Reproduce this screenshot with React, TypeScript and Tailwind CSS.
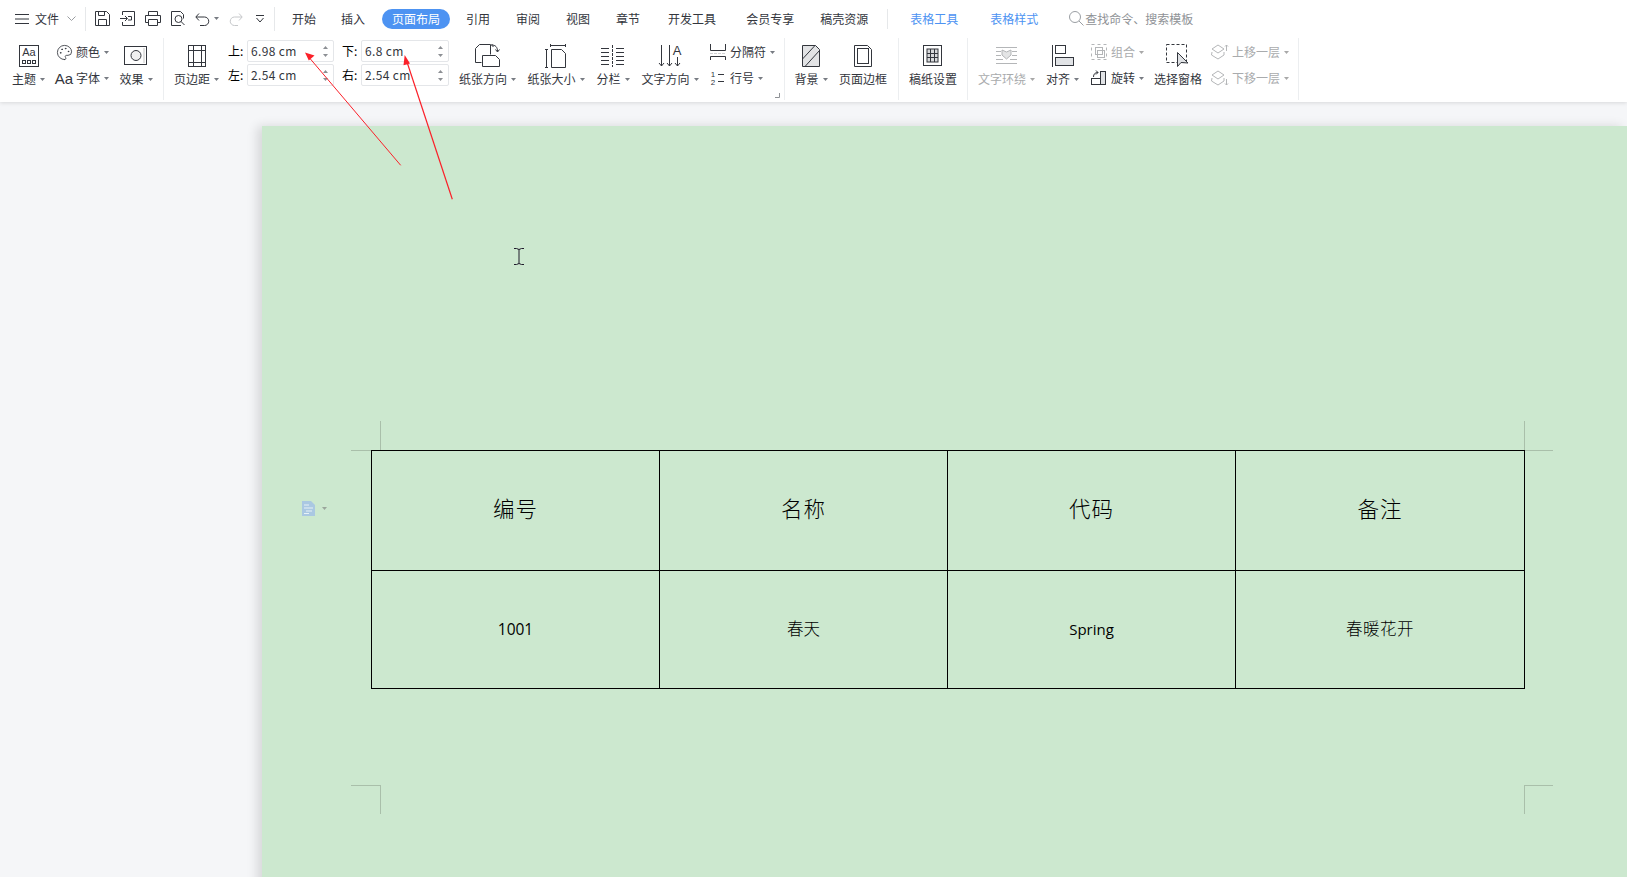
import React from "react";
import { Palette } from "lucide-react";

const DARK = "#33363d";
const GRAY = "#b4b6b8";

function Caret({ gray = false }: { gray?: boolean }) {
  return (
    <svg width="5" height="3" viewBox="0 0 5 3" className="ml-[4px] shrink-0">
      <path d="M0 0h5L2.5 3z" fill={gray ? "#a8a8a8" : "#777b82"} />
    </svg>
  );
}

function Big({ icon, label, caret = true, gray = false, className }: { icon: React.ReactNode; label: string; caret?: boolean; gray?: boolean; className: string }) {
  return (
    <div className={`flex flex-col items-center pt-[7px] shrink-0 ${className}`}>
      <div className="h-[24px] flex items-center justify-center">{icon}</div>
      <div className={`mt-[2px] h-[18px] flex items-center whitespace-nowrap leading-[18px] ${gray ? "text-[#a9abad]" : "text-[#33363d]"}`}>
        {label}
        {caret && <Caret gray={gray} />}
      </div>
    </div>
  );
}

function Small({ icon, label, gray = false }: { icon: React.ReactNode; label: string; gray?: boolean }) {
  return (
    <div className={`h-[24px] flex items-center whitespace-nowrap ${gray ? "text-[#a9abad]" : "text-[#33363d]"}`}>
      <span className="w-[16px] h-[16px] mr-[4px] flex items-center justify-center shrink-0">{icon}</span>
      {label}
      <Caret gray={gray} />
    </div>
  );
}

function Sep({ className }: { className: string }) {
  return <div className={`w-px h-[62px] mt-px bg-[#eceef0] shrink-0 ${className}`} />;
}

function Spin() {
  return (
    <div className="flex flex-col gap-[5px] mr-[5px]">
      <svg width="5" height="3" viewBox="0 0 5 3"><path d="M2.5 0L5 3H0z" fill="#8c8f94" /></svg>
      <svg width="5" height="3" viewBox="0 0 5 3"><path d="M0 0h5L2.5 3z" fill="#8c8f94" /></svg>
    </div>
  );
}

function Field({ value, className }: { value: string; className: string }) {
  return (
    <div className={`h-[22px] border border-[#e4e6e9] rounded-[2px] bg-white flex items-center justify-between pl-[3px] tracking-[0.35px] text-[12px] text-[#33363d] ${className}`}>
      <span>{value}</span>
      <Spin />
    </div>
  );
}

function Tab({ label, className = "" }: { label: string; className?: string }) {
  return <span className={`whitespace-nowrap text-[#33363d] ${className}`}>{label}</span>;
}

const s = { fill: "none", stroke: DARK, strokeWidth: 1 } as const;
const g = { fill: "none", stroke: GRAY, strokeWidth: 1 } as const;

const ThemeIcon = (
  <svg width="22" height="24" viewBox="0 0 22 24">
    <rect x="1.5" y="1.5" width="19" height="21" {...s} />
    <text x="11" y="12" textAnchor="middle" fontSize="11" fill={DARK} fontFamily="'Liberation Sans',sans-serif">Aa</text>
    <rect x="4.5" y="16.5" width="3" height="3" {...s} />
    <rect x="9.5" y="16.5" width="3" height="3" {...s} />
    <rect x="14.5" y="16.5" width="3" height="3" {...s} />
  </svg>
);
const EffectIcon = (
  <svg width="24" height="20" viewBox="0 0 24 20">
    <rect x="0.5" y="0.5" width="22" height="18" {...s} />
    <circle cx="12" cy="9.5" r="5" fill="#f0f0f0" stroke={DARK} />
    <path d="M20 2v15" stroke="#e2e2e2" strokeWidth="2" />
  </svg>
);
const MarginIcon = (
  <svg width="20" height="24" viewBox="0 0 20 24">
    <rect x="1.5" y="1.5" width="17" height="21" {...s} />
    <path d="M6.5 1.5v21M14.5 1.5v21M1.5 6.5h17M1.5 18.5h17" {...s} />
  </svg>
);
const OrientIcon = (
  <svg width="26" height="24" viewBox="0 0 26 24">
    <path d="M4.5 0.5h11v10M4.500 0.500l-4 4v14h6" {...s} />
    <path d="M7.5 11.5h13l4 4v7h-17z" {...s} />
    <path d="M16.500 1c4 0 6 2 6 6.500M20.500 5.500l2 2.500 2-2.500M18.500 -1l-2 2 2 2" {...s} />
  </svg>
);
const SizeIcon = (
  <svg width="22" height="24" viewBox="0 0 22 24">
    <path d="M5.5 1.5h15M5.5 0v3M20.5 0v3M1.5 5v19M0 5.5h3M0 23.5h3" {...s} />
    <path d="M6.5 5.5h10l4 4v14h-14z" {...s} />
  </svg>
);
const ColsIcon = (
  <svg width="24" height="24" viewBox="0 0 24 24">
    <path d="M0 4.5h8M0 8.5h8M0 12.5h8M0 16.5h8M0 20.5h8M15 4.5h8M15 8.5h8M15 12.5h8M15 16.5h8M15 20.5h8" {...s} />
    <path d="M11.5 1v22" {...s} strokeDasharray="3 1" />
  </svg>
);
const DirIcon = (
  <svg width="24" height="24" viewBox="0 0 24 24">
    <path d="M3.500 1v21M11.500 1v21M19.500 13v9" {...s} />
    <path d="M1 19l2.500 3 2.500-3M9 19l2.500 3 2.500-3M17 19l2.500 3 2.500-3" {...s} />
    <text x="19" y="11" textAnchor="middle" fontSize="13" fill={DARK} fontFamily="'Liberation Sans',sans-serif">A</text>
  </svg>
);
const BreakIcon = (
  <svg width="16" height="16" viewBox="0 0 16 16">
    <path d="M.5 0v6.500h15V0M.5 16v-3.500h15V16" {...s} />
    <path d="M0 9.500h16" {...s} strokeDasharray="3 1" stroke="#cfd0d2" />
  </svg>
);
const LineNoIcon = (
  <svg width="16" height="16" viewBox="0 0 16 16">
    <text x="3" y="7" textAnchor="middle" fontSize="8" fill={DARK} fontFamily="'Liberation Sans',sans-serif">1</text>
    <text x="3" y="15" textAnchor="middle" fontSize="8" fill={DARK} fontFamily="'Liberation Sans',sans-serif">2</text>
    <path d="M8 4.5h6M8 11.5h6" {...s} />
  </svg>
);
const BgIcon = (
  <svg width="20" height="24" viewBox="0 0 20 24">
    <path d="M1.5 1.5h13l4 4v17h-17z" fill="#e2e3e5" stroke={DARK} />
    <path d="M1.5 15L14 1.5M4 22.5L18.5 6.5" {...s} />
  </svg>
);
const BorderIcon = (
  <svg width="20" height="24" viewBox="0 0 20 24">
    <path d="M1.5 1.5h13l4 4v17h-17z" {...s} />
    <rect x="4.5" y="4.5" width="11" height="15" {...s} />
  </svg>
);
const GridIcon = (
  <svg width="20" height="22" viewBox="0 0 20 22">
    <rect x="0.5" y="0.5" width="18" height="20" {...s} />
    <rect x="4" y="4" width="11" height="13" fill="#d8d9db" stroke={DARK} />
    <path d="M4 8.5h11M4 12.5h11M7.5 4v13M11.5 4v13" {...s} />
  </svg>
);
const WrapIcon = (
  <svg width="22" height="18" viewBox="0 0 22 18">
    <path d="M0 .5h21M0 4.5h5M16 4.5h5M0 8.5h5M16 8.5h5M0 12.5h7M14 12.5h7M0 16.5h21" {...g} />
    <path d="M6 3l4.500 2 4.500-2v5l-4.500 4-4.500-4z" fill="#e4e5e6" stroke={GRAY} />
  </svg>
);
const AlignIcon = (
  <svg width="22" height="22" viewBox="0 0 22 22">
    <path d="M.5 0v22" {...s} />
    <rect x="3.500" y="0.500" width="10" height="8" fill="none" stroke={DARK} />
    <rect x="3.500" y="12.500" width="18" height="8" fill="#e1e3e6" stroke={DARK} />
  </svg>
);
const GroupIcon = (
  <svg width="16" height="16" viewBox="0 0 16 16">
    <rect x="0.500" y="0.500" width="15" height="15" {...g} strokeDasharray="3 3" />
    <rect x="4.500" y="3.500" width="7" height="7" {...g} />
    <rect x="6.500" y="6.500" width="7" height="7" {...g} />
  </svg>
);
const RotateIcon = (
  <svg width="16" height="16" viewBox="0 0 16 16">
    <rect x="0.500" y="8.500" width="9" height="6" {...s} />
    <rect x="9.500" y="1.500" width="5" height="13" fill="#e1e3e6" stroke={DARK} />
    <path d="M2.500 7c0-3 1.500-4.500 4.500-4.500M5 .5l2 2-2 2" {...s} />
  </svg>
);
const PaneIcon = (
  <svg width="24" height="24" viewBox="0 0 24 24">
    <rect x="0.500" y="0.500" width="20" height="18" {...s} strokeDasharray="3 2" />
    <path d="M11.500 8.500v14l3.500-4 7 .5z" fill="#dfe1e4" stroke={DARK} />
  </svg>
);
const UpIcon = (
  <svg width="18" height="16" viewBox="0 0 18 16" className="shrink-0">
    <path d="M1 5l6-4 6 4-6 4zM1 8l-.5 3 6.500 4 6-4V8" {...g} />
    <path d="M15.500 7V1M14 2.500l1.500-1.500 1.500 1.500" {...g} />
  </svg>
);
const DownIcon = (
  <svg width="18" height="16" viewBox="0 0 18 16" className="shrink-0">
    <path d="M1 5l6-4 6 4-6 4zM1 8l-.5 3 6.500 4 6-4V8" {...g} />
    <path d="M15.500 9v6M14 13.500l1.500 1.500 1.500-1.500" {...g} />
  </svg>
);

function Mark({ className }: { className: string }) {
  return <div className={`absolute bg-[#a9bfaa] ${className}`} />;
}

export default function App() {
  const cell = "flex items-center justify-center border-black";
  return (
    <div className="w-[1627px] h-[877px] overflow-hidden relative bg-[#f5f6f8] flex flex-col text-[12px] leading-[18px]" style={{ fontFamily: "'Noto Sans CJK SC','Noto Sans',sans-serif" }}>
      <header className="bg-white h-[102px] shrink-0 shadow-[0_1px_4px_rgba(0,0,0,0.12)] relative z-10">
        <div className="h-[37px] flex items-center">
          <svg width="14" height="10" viewBox="0 0 14 10" className="ml-[15px]"><path d="M0 .5h14M0 5h14M0 9.500h14" {...s} /></svg>
          <Tab label="文件" className="ml-[6px]" />
          <svg width="9" height="5" viewBox="0 0 9 5" className="ml-[8px]"><path d="M.5.5l4 4 4-4" stroke="#9a9da1" fill="none" /></svg>
          <div className="w-px h-[24px] bg-[#e6e8ea] ml-[9px]" />
          <svg width="15" height="15" viewBox="0 0 15 15" className="ml-[9px]"><path d="M.5.5h11l3 3v11H.5zM3.500.5v4h6v-4M3.500 14.500v-6h8v6" {...s} /></svg>
          <svg width="15" height="15" viewBox="0 0 15 15" className="ml-[10px]"><path d="M2.500 4V.5h12v14h-12V11M0 7.500h7M5 5l2.500 2.500L5 10M8 5.500h3.500v3.500H8" {...s} /></svg>
          <svg width="16" height="15" viewBox="0 0 16 15" className="ml-[10px]"><path d="M3.500 4.500V.5h9v4M3.500 11.500h-3v-7h15v7h-3M3.500 8.500h9v6h-9z" {...s} /></svg>
          <svg width="15" height="15" viewBox="0 0 15 15" className="ml-[10px]"><path d="M10 14.500H.5V.5h9l3 3v4" {...s} /><circle cx="7.500" cy="8" r="3.500" {...s} /><path d="M10 10.500l3.500 3.500" {...s} /></svg>
          <svg width="15" height="14" viewBox="0 0 15 14" className="ml-[9px]"><path d="M1 5h8.500a4.200 4.200 0 010 8.500H5M4 1.500L.8 5 4 8.500" {...s} /></svg>
          <Caret />
          <svg width="14" height="14" viewBox="0 0 14 14" className="ml-[10px]"><path d="M13 5H5.500a4.200 4.200 0 000 8.500H9M10 1.500L13.200 5 10 8.500" fill="none" stroke="#c6c8ca" /></svg>
          <svg width="8" height="8" viewBox="0 0 8 8" className="ml-[13px]"><path d="M0 .5h8M.5 3l3.500 4 3.500-4" {...s} /></svg>
          <div className="w-px h-[24px] bg-[#e6e8ea] ml-[10px]" />
          <Tab label="开始" className="ml-[17px]" />
          <Tab label="插入" className="ml-[25px]" />
          <span className="ml-[17px] h-[20px] w-[68px] rounded-full bg-[#4d93f2] text-white flex items-center justify-center">页面布局</span>
          <Tab label="引用" className="ml-[16px]" />
          <Tab label="审阅" className="ml-[26px]" />
          <Tab label="视图" className="ml-[26px]" />
          <Tab label="章节" className="ml-[26px]" />
          <Tab label="开发工具" className="ml-[28px]" />
          <Tab label="会员专享" className="ml-[30px]" />
          <Tab label="稿壳资源" className="ml-[26px]" />
          <div className="w-px h-[20px] bg-[#e6e8ea] ml-[19px]" />
          <span className="ml-[22px] text-[#4d93f2] whitespace-nowrap">表格工具</span>
          <span className="ml-[32px] text-[#4d93f2] whitespace-nowrap">表格样式</span>
          <svg width="15" height="15" viewBox="0 0 15 15" className="ml-[31px]"><circle cx="6" cy="6" r="5.500" fill="none" stroke="#9a9ea3" /><path d="M10 10l4.500 4.500" stroke="#9a9ea3" /></svg>
          <span className="ml-px text-[#8f9296] whitespace-nowrap">查找命令、搜索模板</span>
        </div>

        <div className="h-[65px] flex items-start">
          <Big icon={ThemeIcon} label="主题" className="ml-[12px] w-[33px]" />
          <div className="ml-[11px] w-[54px] pt-[3px] flex flex-col gap-[2px] shrink-0">
            <Small icon={<Palette size={17} strokeWidth={1.2} color={DARK} className="shrink-0" />} label="颜色" />
            <Small icon={<span className="text-[15px] leading-none text-[#33363d]" style={{ fontFamily: "'Liberation Sans',sans-serif" }}>Aa</span>} label="字体" />
          </div>
          <Big icon={EffectIcon} label="效果" className="ml-[9px] w-[34px]" />
          <Sep className="ml-[10px]" />
          <Big icon={MarginIcon} label="页边距" className="ml-[10px] w-[45px]" />
          <div className="ml-[9px] mt-[3px] w-[221px] shrink-0 grid grid-cols-[19px_87px_19px_88px] gap-x-0 gap-y-[2px] items-center">
            <span>上:</span>
            <Field value="6.98 cm" className="w-[87px]" />
            <span className="ml-[8px] whitespace-nowrap">下:</span>
            <Field value="6.8 cm" className="w-[88px] ml-[8px]" />
            <span>左:</span>
            <Field value="2.54 cm" className="w-[87px]" />
            <span className="ml-[8px] whitespace-nowrap">右:</span>
            <Field value="2.54 cm" className="w-[88px] ml-[8px]" />
          </div>
          <Big icon={OrientIcon} label="纸张方向" className="ml-[10px] w-[57px]" />
          <Big icon={SizeIcon} label="纸张大小" className="ml-[11px] w-[58px]" />
          <Big icon={ColsIcon} label="分栏" className="ml-[10px] w-[36px]" />
          <Big icon={DirIcon} label="文字方向" className="ml-[9px] w-[60px]" />
          <div className="ml-[10px] w-[66px] pt-[3px] flex flex-col gap-[2px] shrink-0">
            <Small icon={BreakIcon} label="分隔符" />
            <Small icon={LineNoIcon} label="行号" />
          </div>
          <div className="relative ml-[8px] shrink-0">
            <Sep className="" />
            <svg width="5" height="5" viewBox="0 0 5 5" className="absolute left-[-9px] top-[56px]"><path d="M4.500 0v4.500H0" stroke="#8f9296" fill="none" /></svg>
          </div>
          <Big icon={BgIcon} label="背景" className="ml-[9px] w-[34px]" />
          <Big icon={BorderIcon} label="页面边框" caret={false} className="ml-[11px] w-[48px]" />
          <Sep className="ml-[11px]" />
          <Big icon={GridIcon} label="稿纸设置" caret={false} className="ml-[10px] w-[48px]" />
          <Sep className="ml-[10px]" />
          <Big icon={WrapIcon} label="文字环绕" gray className="ml-[10px] w-[57px]" />
          <Big icon={AlignIcon} label="对齐" className="ml-[11px] w-[33px]" />
          <div className="ml-[12px] w-[54px] pt-[3px] flex flex-col gap-[2px] shrink-0">
            <Small icon={GroupIcon} label="组合" gray />
            <Small icon={RotateIcon} label="旋转" />
          </div>
          <Big icon={PaneIcon} label="选择窗格" caret={false} className="ml-[9px] w-[48px]" />
          <div className="ml-[10px] w-[70px] pt-[3px] flex flex-col gap-[2px] shrink-0">
            <Small icon={UpIcon} label="上移一层" gray />
            <Small icon={DownIcon} label="下移一层" gray />
          </div>
          <Sep className="ml-[16px]" />
        </div>
      </header>

      <main className="flex-1 pl-[262px] pt-[24px] overflow-hidden">
        <section className="relative h-[800px] w-[1365px] bg-[#cce8cf] shadow-[-5px_0_10px_rgba(0,0,0,0.12)] pt-[324px] pl-[109px]">
          <Mark className="left-[118px] top-[295px] w-px h-[29px]" />
          <Mark className="left-[89px] top-[324px] w-[20px] h-px" />
          <Mark className="left-[1262px] top-[295px] w-px h-[29px]" />
          <Mark className="left-[1263px] top-[324px] w-[28px] h-px" />
          <Mark className="left-[118px] top-[659px] w-px h-[29px]" />
          <Mark className="left-[89px] top-[659px] w-[29px] h-px" />
          <Mark className="left-[1262px] top-[659px] w-px h-[29px]" />
          <Mark className="left-[1262px] top-[659px] w-[29px] h-px" />

          <div className="absolute left-[40px] top-[375px] flex items-center">
            <svg width="13" height="15" viewBox="0 0 13 15">
              <path d="M0 0h9l4 4v11H0z" fill="#aac8e2" />
              <path d="M2 4h5M2 7h9M4 10h6M2 12.500h5" stroke="#e8f2f6" />
            </svg>
            <svg width="5" height="3" viewBox="0 0 5 3" className="ml-[7px]"><path d="M0 0h5L2.500 3z" fill="#9aa69c" /></svg>
          </div>

          <div className="relative grid grid-cols-[288px_288px_288px_289px] grid-rows-[120px_118px] w-[1154px] border-r border-b border-black text-black">
            {["编号", "名称", "代码", "备注"].map((t) => (
              <div key={t} className={`${cell} border-l border-t text-[21.5px] font-light tracking-[1px] pb-[6px]`}>{t}</div>
            ))}
            <div className={`${cell} border-l border-t text-[15.5px] pb-[2px]`} style={{ fontFamily: "'Open Sans',sans-serif" }}>1001</div>
            <div className={`${cell} border-l border-t text-[16.5px] font-light pb-[3px]`}>春天</div>
            <div className={`${cell} border-l border-t text-[15px] pb-[2px]`} style={{ fontFamily: "'Open Sans',sans-serif" }}>Spring</div>
            <div className={`${cell} border-l border-t text-[16.5px] font-light tracking-[0.5px] pb-[3px]`}>春暖花开</div>
          </div>

          <svg width="12" height="17" viewBox="0 0 12 17" className="absolute left-[251px] top-[122px]">
            <path d="M1 .5h2.500L6 1.500 8.500.5H11M6 1.500v14M1 16.500h2.500L6 15.500l2.500 1H11" fill="none" stroke="#1f1a2b" />
          </svg>
        </section>
      </main>

      <svg width="1627" height="877" className="absolute left-0 top-0 z-20 pointer-events-none">
        <path d="M400.700 165.300L310 58.500" stroke="#fb2029" strokeWidth="1" fill="none" />
        <path d="M305 52.500l9.500 3-5.700 5z" fill="#fb2029" />
        <path d="M452.300 199.300L407 62" stroke="#fb2029" strokeWidth="1.200" fill="none" />
        <path d="M404.700 55l5.300 8.500-6.500 1.700z" fill="#fb2029" />
      </svg>
    </div>
  );
}
